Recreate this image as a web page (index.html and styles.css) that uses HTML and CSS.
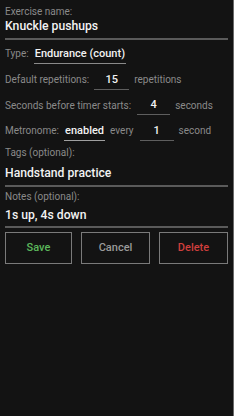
FILE: index.html
```html
<!DOCTYPE html>
<html>
<head>
<meta charset="utf-8">
<link rel="stylesheet" href="styles.css">
</head>
<body>
<div class="page">
  <div class="field field-name">
    <div class="label">Exercise name:</div>
    <div class="input">Knuckle pushups</div>
  </div>
  <div class="row row-type">
    <span class="lbl">Type:</span>
    <span class="spinner">Endurance (count)</span>
  </div>
  <div class="row">
    <span class="lbl">Default repetitions:</span>
    <span class="num num-reps">15</span>
    <span class="lbl">repetitions</span>
  </div>
  <div class="row">
    <span class="lbl">Seconds before timer starts:</span>
    <span class="num num-sec">4</span>
    <span class="lbl">seconds</span>
  </div>
  <div class="row">
    <span class="lbl">Metronome:</span>
    <span class="spinner">enabled</span>
    <span class="lbl">every</span>
    <span class="num num-met">1</span>
    <span class="lbl">second</span>
  </div>
  <div class="field field-tags">
    <div class="label">Tags (optional):</div>
    <div class="input">Handstand practice</div>
  </div>
  <div class="field field-notes">
    <div class="label">Notes (optional):</div>
    <div class="input">1s up, 4s down</div>
  </div>
  <div class="buttons">
    <button class="btn btn-save">Save</button>
    <button class="btn btn-cancel">Cancel</button>
    <button class="btn btn-delete">Delete</button>
  </div>
</div>
</body>
</html>
```
FILE: styles.css
```css
html, body {
  margin: 0;
  padding: 0;
  background: #131313;
}
body {
  width: 234px;
  height: 416px;
  box-sizing: border-box;
  border-right: 1px solid #6b6b6b;
  font-family: Roboto, "Noto Sans", sans-serif;
  overflow: hidden;
}
.page {
  padding: 6px 5px 0 5px;
}
.label {
  color: #8a8a8a;
  font-size: 10px;
  line-height: 12px;
}
.input {
  color: #f2f2f2;
  font-size: 12.2px;
  font-weight: 500;
  line-height: 16px;
  padding: 2px 0 4px;
  border-bottom: 2px solid #5a5a5a;
}
.field-name .input {
  padding-top: 0;
  padding-bottom: 4px;
}
.row {
  display: flex;
  align-items: center;
  height: 25.7px;
  font-size: 10px;
  color: #8a8a8a;
}
.row-type {
  margin-top: 1px;
}
.lbl {
  color: #8a8a8a;
}
.spinner {
  color: #f2f2f2;
  font-size: 11px;
  font-weight: 500;
  padding: 3px 1px 3px;
  border-bottom: 1.5px solid #a0a0a0;
  margin: 0 5px;
}
.row-type .spinner {
  border-bottom-color: #8a8a8a;
}
.num {
  color: #f2f2f2;
  font-size: 11px;
  font-weight: 500;
  text-align: center;
  padding: 3px 0 3px;
  border-bottom: 1.5px solid #5e5e5e;
  margin: 0 5px;
}
.num-reps { width: 35px; }
.num-sec { width: 33px; margin-left: 6px; }
.num-met { width: 34px; margin-left: 6px; }
.field-tags { margin-top: 3px; }
.field-tags .input { padding-top: 6px; }
.field-notes { margin-top: 4px; }
.field-notes .input { padding-top: 4px; padding-bottom: 3px; }
.buttons {
  display: flex;
  justify-content: space-between;
  margin-top: 4px;
}
.btn {
  height: 32px;
  background: transparent;
  border: 1px solid #7a7a7a;
  font-family: Roboto, "Noto Sans", sans-serif;
  font-size: 11px;
  font-weight: 500;
  padding: 0;
}
.btn-save { color: #5cb85c; width: 67px; }
.btn-cancel { color: #9a9a9a; width: 69px; }
.btn-delete { color: #cf3f3d; width: 69px; }
```
